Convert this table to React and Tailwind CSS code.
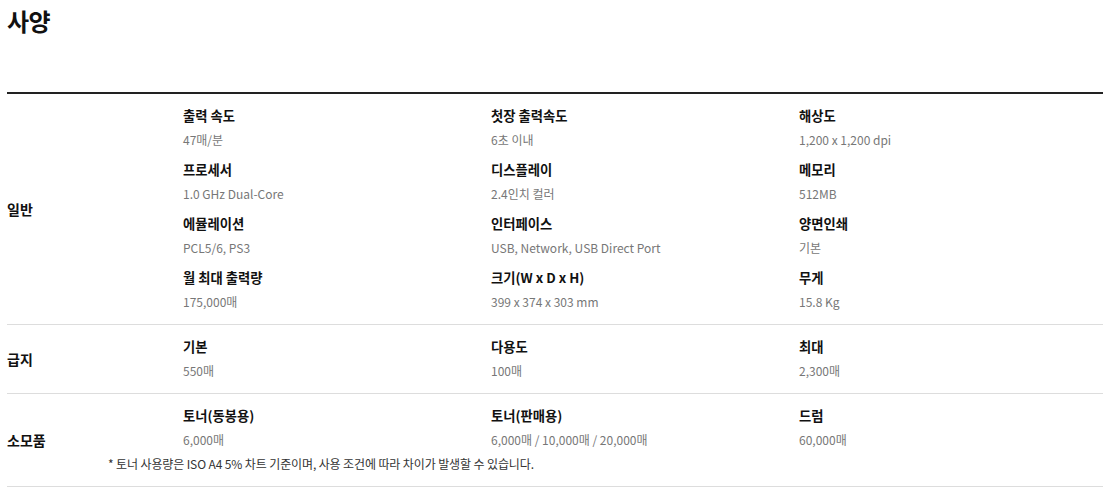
const SPECS = [
  {
    label: '일반',
    items: [
      { title: '출력 속도', value: '47매/분' },
      { title: '첫장 출력속도', value: '6초 이내' },
      { title: '해상도', value: '1,200 x 1,200 dpi' },
      { title: '프로세서', value: '1.0 GHz Dual-Core' },
      { title: '디스플레이', value: '2.4인치 컬러' },
      { title: '메모리', value: '512MB' },
      { title: '에뮬레이션', value: 'PCL5/6, PS3' },
      { title: '인터페이스', value: 'USB, Network, USB Direct Port' },
      { title: '양면인쇄', value: '기본' },
      { title: '월 최대 출력량', value: '175,000매' },
      { title: '크기(W x D x H)', value: '399 x 374 x 303 mm' },
      { title: '무게', value: '15.8 Kg' },
    ],
  },
  {
    label: '급지',
    items: [
      { title: '기본', value: '550매' },
      { title: '다용도', value: '100매' },
      { title: '최대', value: '2,300매' },
    ],
  },
  {
    label: '소모품',
    items: [
      { title: '토너(동봉용)', value: '6,000매' },
      { title: '토너(판매용)', value: '6,000매 / 10,000매 / 20,000매' },
      { title: '드럼', value: '60,000매' },
    ],
    note: '* 토너 사용량은 ISO A4 5% 차트 기준이며, 사용 조건에 따라 차이가 발생할 수 있습니다.',
  },
]

export default function App() {
  return (
    <div className="bg-white pl-[7px] pr-[4px] font-['Noto_Sans_CJK_KR','Noto_Sans',sans-serif] text-[#111]">
      {/* 제목 */}
      <h2 className="pt-[3px] text-[24px] font-bold leading-[36px] tracking-[-0.5px]">사양</h2>

      <div className="mt-[53px] border-t-2 border-[#222]">
        {SPECS.map((row) => (
          <div key={row.label} className="flex items-center border-b border-[#ddd]">
            <div className="w-[176px] shrink-0 text-[14px] font-bold">{row.label}</div>
            <div className="flex-1 pt-[12px] pb-[12px]">
              <div className="grid grid-cols-[308px_308px_1fr] gap-y-[10px]">
                {row.items.map((item) => (
                  <div key={item.title}>
                    <p className="text-[13.3px] font-bold leading-[20px] text-[#111]">{item.title}</p>
                    <p className="mt-[4px] text-[12px] leading-[20px] text-[#777]">{item.value}</p>
                  </div>
                ))}
              </div>
              {row.note && (
                <p className="-ml-[75px] mt-[4px] text-[12px] leading-[20px] tracking-[-0.12px] text-[#333]">
                  {row.note}
                </p>
              )}
            </div>
          </div>
        ))}
      </div>
    </div>
  )
}
